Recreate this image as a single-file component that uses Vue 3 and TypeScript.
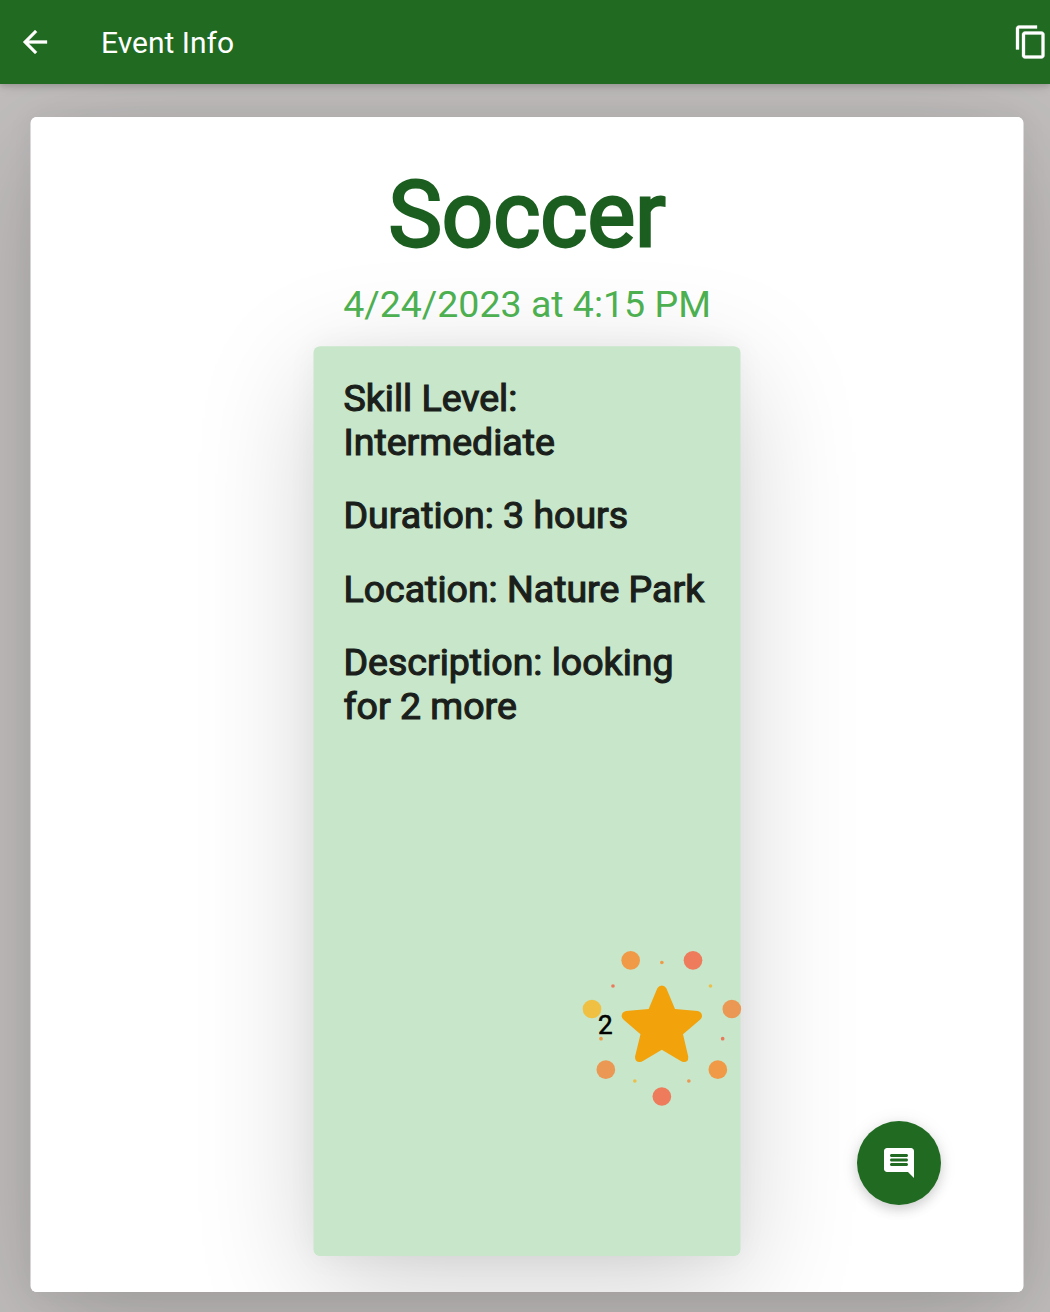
<script setup lang="ts">
interface Dot {
  x: number
  y: number
  r: number
  color: string
}

const details: string[] = [
  'Skill Level: Intermediate',
  'Duration: 3 hours',
  'Location: Nature Park',
  'Description: looking for 2 more',
]

const likes = 2

const dots: Dot[] = [
  { x: 182, y: 61, r: 28, color: '#f09a48' },
  { x: 369, y: 61, r: 28, color: '#ed7b5c' },
  { x: 66, y: 207, r: 28, color: '#efc041' },
  { x: 485.5, y: 207, r: 28, color: '#ea9853' },
  { x: 107.5, y: 389, r: 28, color: '#ea9853' },
  { x: 443.5, y: 389, r: 28, color: '#f09a48' },
  { x: 275.5, y: 469.5, r: 28, color: '#ed7b5c' },
  { x: 275.5, y: 67.5, r: 5.5, color: '#f09a48' },
  { x: 129, y: 138, r: 5.5, color: '#ea7a5c' },
  { x: 421.5, y: 138, r: 5.5, color: '#ebc04a' },
  { x: 93, y: 296, r: 5.5, color: '#f09a48' },
  { x: 458, y: 296, r: 5.5, color: '#ea7a5c' },
  { x: 194.5, y: 423, r: 5.5, color: '#ebc04a' },
  { x: 356.5, y: 423, r: 5.5, color: '#ea9853' },
]
</script>

<template>
  <div class="screen">
    <header class="bar">
      <svg class="icon outlined" viewBox="0 0 24 24"><path d="M20 11H7.83l5.59-5.59L12 4l-8 8 8 8 1.41-1.41L7.83 13H20v-2z" /></svg>
      <span class="bar-title">Event Info</span>
      <svg class="icon outlined" viewBox="0 0 24 24"><path d="M16 1H4c-1.1 0-2 .9-2 2v14h2V3h12V1zm3 4H8c-1.1 0-2 .9-2 2v14c0 1.1.9 2 2 2h11c1.1 0 2-.9 2-2V7c0-1.1-.9-2-2-2zm0 16H8V7h11v14z" /></svg>
    </header>
    <main class="sheet">
      <div class="sheet-inner">
        <h1>Soccer</h1>
        <div class="date">4/24/2023 at 4:15 PM</div>
        <section class="info">
          <p v-for="line in details" :key="line">{{ line }}</p>
          <div class="like">
            <svg class="burst" viewBox="0 0 570 540">
              <circle v-for="(d, i) in dots" :key="i" :cx="d.x" :cy="d.y" :r="d.r" :fill="d.color" />
              <path
                fill="#f2a20a"
                d="M262 145Q267 136.500 275.500 136.500T289 145L315 207L383 213Q396 216 396 228Q396 234 390 239L339 283L354.500 349Q356 366 342 366Q337 366 331 362L275.500 329L220 362Q214 366 209 366Q195 366 195 350L211.500 283L161 239Q155 234 155 228Q155 216 168 213L236 207Z"
              />
            </svg>
            <span class="count">{{ likes }}</span>
          </div>
        </section>
      </div>
    </main>
    <button class="fab" aria-label="Comments">
      <svg class="icon" viewBox="0 0 24 24"><path d="M21.99 4c0-1.1-.89-2-1.99-2H4c-1.1 0-2 .9-2 2v12c0 1.1.9 2 2 2h14l4 4-.01-18zM17 14H7c-.55 0-1-.45-1-1s.45-1 1-1h10c.55 0 1 .45 1 1s-.45 1-1 1zm0-3H7c-.55 0-1-.45-1-1s.45-1 1-1h10c.55 0 1 .45 1 1s-.45 1-1 1zm0-3H7c-.55 0-1-.45-1-1s.45-1 1-1h10c.55 0 1 .45 1 1s-.45 1-1 1z" /></svg>
    </button>
  </div>
</template>

<style>
body {
  margin: 0;
}
</style>

<style scoped>
.screen {
  position: relative;
  box-sizing: border-box;
  width: 1050px;
  height: 1312px;
  overflow: hidden;
  display: flex;
  flex-direction: column;
  background: #c1bebd;
  font-family: Roboto, sans-serif;
}
.bar {
  position: relative;
  z-index: 1;
  flex: none;
  display: flex;
  align-items: center;
  box-sizing: border-box;
  height: 84px;
  padding: 0 1px 0 17px;
  background: #206b21;
  box-shadow: 0 2px 6px rgba(0, 0, 0, 0.15), 0 2px 12px rgba(0, 0, 0, 0.1);
}
.icon {
  flex: none;
  display: block;
  width: 36px;
  height: 36px;
  fill: #fff;
}
.outlined {
  stroke: #fff;
  stroke-width: 0.2;
}
.bar-title {
  flex: 1;
  margin: 2px 0 0 48px;
  color: #fff;
  font-size: 30px;
  line-height: 36px;
}
.sheet {
  flex: none;
  width: 992px;
  height: 1175px;
  margin: 33px 0 0 31px;
  border-radius: 6px;
  background: #fff;
  box-shadow: 0.5px 0 0 #fff, -0.5px 0 0 #fff, 0 30px 120px rgba(0, 0, 0, 0.18), 0 0 30px rgba(0, 0, 0, 0.05);
}
.sheet-inner {
  height: 100%;
  overflow: hidden;
  border-radius: 6px;
  display: flex;
  flex-direction: column;
  align-items: center;
}
h1 {
  margin: 46px 0 0;
  color: #1b5e20;
  font-size: 90px;
  font-weight: 400;
  line-height: 106px;
  -webkit-text-stroke: 2.800px #1b5e20;
}
.date {
  position: relative;
  z-index: 1;
  margin-top: 13px;
  color: #4caf50;
  font-size: 37.500px;
  line-height: 44px;
}
.info {
  flex: none;
  box-sizing: border-box;
  display: flex;
  flex-direction: column;
  width: 426px;
  height: 909px;
  margin-top: 21px;
  padding: 29px 29.500px 0;
  border-radius: 6px;
  background: #c8e6c9;
  box-shadow: 0.5px -0.5px 0 #c8e6c9, -0.5px -0.5px 0 #c8e6c9, 0 30px 120px rgba(0, 0, 0, 0.18), 0 0 30px rgba(0, 0, 0, 0.05);
}
p {
  margin: 0 0 29.350px;
  color: #1b1f1b;
  font-size: 37.500px;
  line-height: 44px;
  -webkit-text-stroke: 1.170px #1b1f1b;
}
.like {
  position: relative;
  width: 190px;
  height: 180px;
  margin: auto 0 136px 226.500px;
  display: flex;
  align-items: center;
}
.burst {
  position: absolute;
  inset: 0;
  width: 190px;
  height: 180px;
}
.count {
  position: relative;
  margin: -10px 0 0 28px;
  color: #000;
  font-size: 26px;
  line-height: 30px;
  -webkit-text-stroke: 0.600px #000;
}
.fab {
  position: absolute;
  left: 857px;
  top: 1121px;
  width: 84px;
  height: 84px;
  padding: 0;
  border: 0;
  border-radius: 50%;
  display: flex;
  align-items: center;
  justify-content: center;
  background: #206b21;
  box-shadow: 0 5px 12px rgba(0, 0, 0, 0.15), 0 1px 20px rgba(0, 0, 0, 0.07);
}
</style>
